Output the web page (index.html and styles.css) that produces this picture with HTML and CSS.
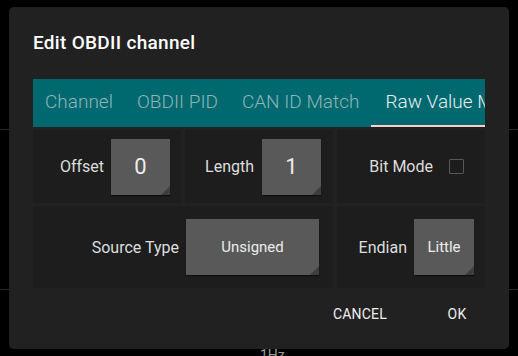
FILE: index.html
```html
<!DOCTYPE html>
<html lang="en">
<head>
    <meta charset="UTF-8">
    <meta name="viewport" content="width=device-width, initial-scale=1.0">
    <title>Edit OBDII channel</title>
    <link rel="stylesheet" href="styles.css">
</head>
<body>
    <div class="backdrop">
        <div class="band band-top"></div>
        <div class="band band-mid"></div>
        <div class="rate">1Hz</div>
    </div>

    <div class="dialog">
        <h2 class="dialog-title">Edit OBDII channel</h2>

        <div class="tabs">
            <div class="tab">Channel</div>
            <div class="tab">OBDII PID</div>
            <div class="tab">CAN ID Match</div>
            <div class="tab active">Raw Value Mapping</div>
        </div>

        <div class="fields">
            <div class="cell">
                <span class="label">Offset</span>
                <div class="box num">0</div>
            </div>
            <div class="cell cell-length">
                <span class="label">Length</span>
                <div class="box num">1</div>
            </div>
            <div class="cell cell-bit">
                <span class="label">Bit Mode</span>
                <span class="check"></span>
            </div>
            <div class="cell cell-wide">
                <span class="label">Source Type</span>
                <div class="box wide">Unsigned</div>
            </div>
            <div class="cell">
                <span class="label">Endian</span>
                <div class="box">Little</div>
            </div>
        </div>

        <div class="actions">
            <button class="btn">CANCEL</button>
            <button class="btn">OK</button>
        </div>
    </div>
</body>
</html>
```

FILE: styles.css
```css
body {
    margin: 0;
    background-color: #000;
    font-family: Roboto, 'Liberation Sans', sans-serif;
    color: #e6e6e6;
    overflow: hidden;
    height: 356px;
}
.backdrop {
    height: 356px;
}
.band {
    border-bottom: 1px solid #2a2a2a;
}
.band-top {
    height: 129px;
}
.band-mid {
    height: 159px;
}
.rate {
    padding: 57px 0 0 260px;
    font-size: 14px;
    line-height: 16px;
    color: #9a9a9a;
}

/* dialog sits over the page */
.dialog {
    position: absolute;
    left: 9px;
    top: 7px;
    width: 500px;
    height: 342px;
    box-sizing: border-box;
    padding: 24px 24px 0;
    background-color: #212121;
    border-radius: 5px;
}
.dialog-title {
    margin: 0 0 24px;
    font-size: 19px;
    line-height: 24px;
    font-weight: 500;
    letter-spacing: 0.3px;
    color: #fff;
}
.tabs {
    display: flex;
    height: 48px;
    background-color: #00686f;
    overflow: hidden;
    white-space: nowrap;
}
.tab {
    flex: none;
    padding: 0 12px;
    font-weight: 300;
    font-size: 19px;
    line-height: 46px;
    color: #8cb6b9;
    border-bottom: 2px solid transparent;
}
.tab.active {
    padding-left: 14px;
    color: #e4f1f1;
    border-bottom-color: #ffcfcf;
}
.fields {
    display: grid;
    grid-template-columns: 1fr 1fr 1fr;
    grid-template-rows: 73px 82px;
    gap: 3px 4px;
    margin-top: 3px;
}
.cell {
    display: flex;
    align-items: center;
    justify-content: flex-end;
    gap: 7px;
    padding-right: 11px;
    background-color: #1d1d1d;
}
.cell-length {
    padding-right: 12px;
    gap: 8px;
}
.cell-bit {
    padding-right: 21px;
    gap: 16px;
}
.cell-wide {
    grid-column: span 2;
    padding-right: 14px;
}
.label {
    font-size: 16px;
    color: #dedede;
}
.box {
    position: relative;
    width: 60px;
    height: 56px;
    display: flex;
    align-items: center;
    justify-content: center;
    background-color: #595959;
    box-shadow: 0 1px 1px rgba(0, 0, 0, 0.5);
    font-size: 15px;
    color: #ececec;
}
.box.num {
    width: 59px;
    font-size: 22px;
}
.box.wide {
    width: 133px;
}
.box::after {
    content: '';
    position: absolute;
    right: 0;
    bottom: 0;
    border-style: solid;
    border-width: 0 0 9px 9px;
    border-color: transparent transparent #3e3e3e transparent;
}
.check {
    width: 13px;
    height: 13px;
    border: 1.5px solid #575757;
    border-radius: 1px;
}
.actions {
    display: flex;
    justify-content: flex-end;
    gap: 30px;
    padding: 8px 0 0;
    margin-right: -4px;
}
.btn {
    min-width: 64px;
    height: 36px;
    padding: 0 8px;
    border: none;
    background: none;
    font-family: Roboto, 'Liberation Sans', sans-serif;
    font-size: 14px;
    font-weight: 400;
    letter-spacing: 0.2px;
    color: #eeeeee;
}
```
